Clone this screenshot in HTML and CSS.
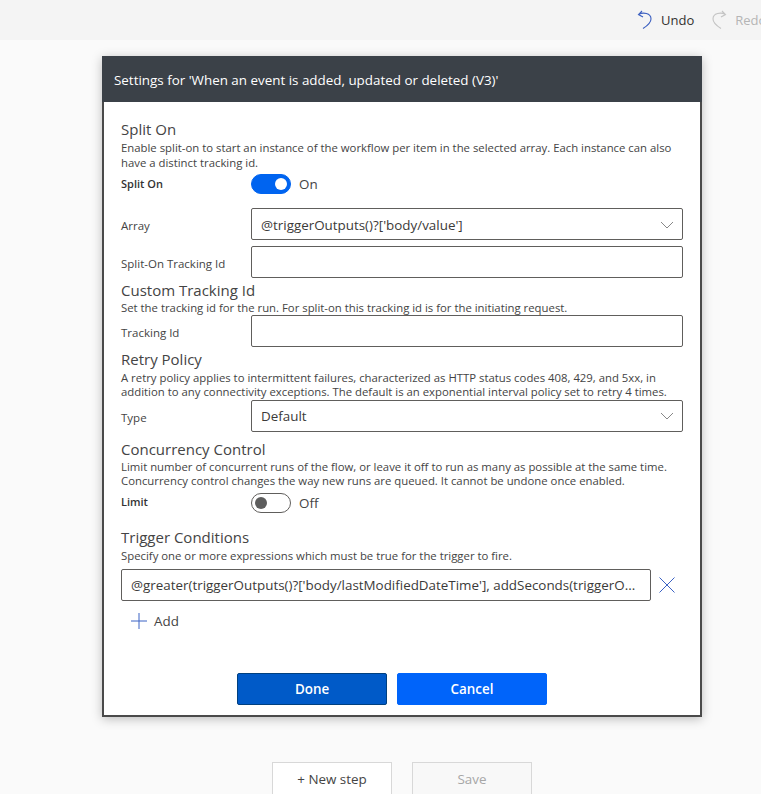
FILE: index.html
```html
<!DOCTYPE html>
<html>
<head>
  <title>Settings</title>
  <link rel="stylesheet" href="styles.css">
</head>
<body>
  <div class="top-bar">
    <div class="top-action">
      <svg class="top-icon" width="16" height="20" viewBox="0 0 16 20"><path d="M5 1 L1.500 4.500 L6 7 M1.500 4.500 C6 2 14 3 14 9 C14 13 10 16 6 18.500" fill="none" stroke="#3b5fc0" stroke-width="1.1"/></svg>
      <span>Undo</span>
    </div>
    <div class="top-action disabled">
      <svg class="top-icon" width="16" height="20" viewBox="0 0 16 20"><path d="M11 1 L14.500 4.500 L10 7 M14.500 4.500 C10 2 2 3 2 9 C2 13 6 16 10 18.500" fill="none" stroke="#c4c4c4" stroke-width="1.1"/></svg>
      <span>Redo</span>
    </div>
  </div>

  <div class="dialog">
    <div class="dialog-head">Settings for 'When an event is added, updated or deleted (V3)'</div>
    <div class="dialog-body">

      <div class="section first">
        <div class="section-title">Split On</div>
        <div class="section-desc">Enable split-on to start an instance of the workflow per item in the selected array. Each instance can also<br>have a distinct tracking id.</div>
        <div class="toggle-row">
          <div class="field-label strong">Split On</div>
          <div class="toggle on"><span class="knob"></span></div>
          <span class="toggle-text">On</span>
        </div>
        <div class="field-row array-row">
          <div class="field-label">Array</div>
          <div class="input select">
            <span>@triggerOutputs()?['body/value']</span>
            <svg class="chevron" width="14" height="8" viewBox="0 0 14 8"><path d="M1 1 L7 7 L13 1" fill="none" stroke="#888" stroke-width="1"/></svg>
          </div>
        </div>
        <div class="field-row tracking-row">
          <div class="field-label">Split-On Tracking Id</div>
          <div class="input"></div>
        </div>
      </div>

      <div class="section tracking">
        <div class="section-title">Custom Tracking Id</div>
        <div class="section-desc">Set the tracking id for the run. For split-on this tracking id is for the initiating request.</div>
        <div class="field-row">
          <div class="field-label">Tracking Id</div>
          <div class="input"></div>
        </div>
      </div>

      <div class="section retry">
        <div class="section-title">Retry Policy</div>
        <div class="section-desc">A retry policy applies to intermittent failures, characterized as HTTP status codes 408, 429, and 5xx, in<br>addition to any connectivity exceptions. The default is an exponential interval policy set to retry 4 times.</div>
        <div class="field-row">
          <div class="field-label">Type</div>
          <div class="input select">
            <span>Default</span>
            <svg class="chevron" width="14" height="8" viewBox="0 0 14 8"><path d="M1 1 L7 7 L13 1" fill="none" stroke="#888" stroke-width="1"/></svg>
          </div>
        </div>
      </div>

      <div class="section concurrency">
        <div class="section-title">Concurrency Control</div>
        <div class="section-desc">Limit number of concurrent runs of the flow, or leave it off to run as many as possible at the same time.<br>Concurrency control changes the way new runs are queued. It cannot be undone once enabled.</div>
        <div class="toggle-row">
          <div class="field-label strong">Limit</div>
          <div class="toggle"><span class="knob"></span></div>
          <span class="toggle-text">Off</span>
        </div>
      </div>

      <div class="section conditions">
        <div class="section-title">Trigger Conditions</div>
        <div class="section-desc">Specify one or more expressions which must be true for the trigger to fire.</div>
        <div class="condition-row">
          <div class="input condition"><span class="condition-text">@greater(triggerOutputs()?['body/lastModifiedDateTime'], addSeconds(triggerO...</span></div>
          <svg class="remove-icon" width="16" height="16" viewBox="0 0 16 16"><path d="M0.500 0.500 L15.500 15.500 M15.500 0.500 L0.500 15.500" fill="none" stroke="#3b62c4" stroke-width="1"/></svg>
        </div>
        <div class="add-row">
          <svg width="16" height="16" viewBox="0 0 16 16"><path d="M8 0 V16 M0 8 H16" fill="none" stroke="#3b62c4" stroke-width="1"/></svg>
          <span>Add</span>
        </div>
      </div>

      <div class="dialog-buttons">
        <button class="btn done">Done</button>
        <button class="btn">Cancel</button>
      </div>
    </div>
  </div>

  <div class="canvas-buttons">
    <div class="canvas-btn">+ New step</div>
    <div class="canvas-btn disabled">Save</div>
  </div>
</body>
</html>
```
FILE: styles.css
```css
html, body {
  height: 794px;
  overflow: hidden;
}
body {
  font-family: "Open Sans", "Noto Sans", sans-serif;
  margin: 0;
  background-color: #fafafa;
  color: #3b3a39;
}
.top-bar {
  height: 40px;
  background-color: #f4f4f4;
  display: flex;
  justify-content: flex-start;
  align-items: center;
  padding-left: 637px;
  gap: 17px;
  font-size: 13px;
  white-space: nowrap;
  overflow: hidden;
}
.top-action {
  display: flex;
  align-items: center;
  gap: 8px;
  color: #323130;
}
.top-action.disabled {
  color: #b5b5b5;
}
.top-icon {
  flex: none;
}
.dialog {
  box-sizing: border-box;
  width: 600px;
  height: 661px;
  margin: 16px 0 0 102px;
  border: 2px solid #4a4a4a;
  border-top: none;
  background-color: white;
  box-shadow: 0 2px 10px rgba(0,0,0,0.25);
  display: flex;
  flex-direction: column;
}
.dialog-head {
  height: 46px;
  margin: 0 -2px;
  padding-left: 12px;
  background-color: #3b4148;
  color: white;
  font-size: 13.4px;
  line-height: 48px;
  flex: none;
}
.dialog-body {
  padding: 0 17px;
  flex: 1;
  display: flex;
  flex-direction: column;
}
.section-title {
  font-size: 15px;
  line-height: 20px;
  color: #444;
}
.section-desc {
  font-size: 11.35px;
  line-height: 14.500px;
  margin-top: 1px;
  color: #444;
  white-space: nowrap;
}
.section.first { padding-top: 17px; }
.section.first .section-desc { margin-top: 2px; }
.section.tracking { padding-top: 2px; }
.section.retry { padding-top: 2px; }
.section.retry .section-desc { margin-top: 2px; }
.section.concurrency { padding-top: 7px; }
.section.conditions { padding-top: 14px; }
.section.conditions .section-desc { margin-top: 2px; }
.toggle-row {
  display: flex;
  align-items: center;
  height: 20px;
  margin-top: 3px;
}
.section.first .toggle-row { margin-top: 4px; }
.section.concurrency .toggle-row { margin-top: 4px; }
.field-row {
  display: flex;
  align-items: center;
}
.section.tracking .field-row { margin-top: -1px; }
.array-row { margin-top: 14px; }
.tracking-row { margin-top: 6px; }
.field-label {
  width: 130px;
  flex: none;
  font-size: 11.5px;
  padding-top: 3px;
  color: #444;
}
.field-label.strong {
  font-weight: 600;
  font-size: 11px;
  color: #333;
  padding-top: 0;
  padding-bottom: 2px;
}
.toggle {
  box-sizing: border-box;
  width: 40px;
  height: 20px;
  border: 1px solid #605e5c;
  border-radius: 10px;
  background-color: white;
  display: flex;
  align-items: center;
  padding: 0 3px;
}
.toggle.on {
  background-color: #0064f0;
  border-color: #0064f0;
  justify-content: flex-end;
}
.knob {
  width: 12px;
  height: 12px;
  border-radius: 50%;
  background-color: #5d5d5d;
}
.toggle.on .knob {
  background-color: white;
}
.toggle-text {
  margin-left: 8px;
  font-size: 13.4px;
  color: #444;
}
.input {
  box-sizing: border-box;
  width: 432px;
  height: 32px;
  flex: none;
  border: 1px solid #605e5c;
  border-radius: 2px;
  padding: 0 9px;
  display: flex;
  align-items: center;
  justify-content: space-between;
  font-size: 13.4px;
  color: #3b3a39;
  background-color: white;
}
.input.select {
  padding-top: 1px;
}
.chevron {
  margin-right: -1px;
}
.condition-row {
  display: flex;
  align-items: center;
  margin-top: 6px;
  gap: 8px;
}
.input.condition {
  width: 530px;
  justify-content: flex-start;
}
.condition-text {
  display: block;
  white-space: nowrap;
}
.add-row {
  display: flex;
  align-items: center;
  gap: 7px;
  margin: 12px 0 0 10px;
  height: 16px;
  font-size: 13.4px;
  color: #444;
}
.dialog-buttons {
  display: flex;
  gap: 10px;
  margin-top: auto;
  margin-left: 116px;
  padding-bottom: 10px;
}
.btn {
  box-sizing: border-box;
  width: 150px;
  height: 32px;
  background-color: #0064fa;
  color: white;
  border: 1px solid #0064fa;
  border-radius: 2px;
  font-family: inherit;
  font-size: 13.4px;
  font-weight: 600;
  padding: 0;
}
.btn.done {
  background-color: #005ac8;
  border-color: #004080;
}
.canvas-buttons {
  display: flex;
  gap: 20px;
  margin: 45px 0 0 272px;
}
.canvas-btn {
  box-sizing: border-box;
  width: 120px;
  height: 36px;
  border: 1px solid #d8d8d8;
  background-color: white;
  text-align: center;
  line-height: 33px;
  font-size: 13.4px;
  color: #444;
}
.canvas-btn.disabled {
  background-color: #f8f8f8;
  color: #a6a6a6;
}
```
